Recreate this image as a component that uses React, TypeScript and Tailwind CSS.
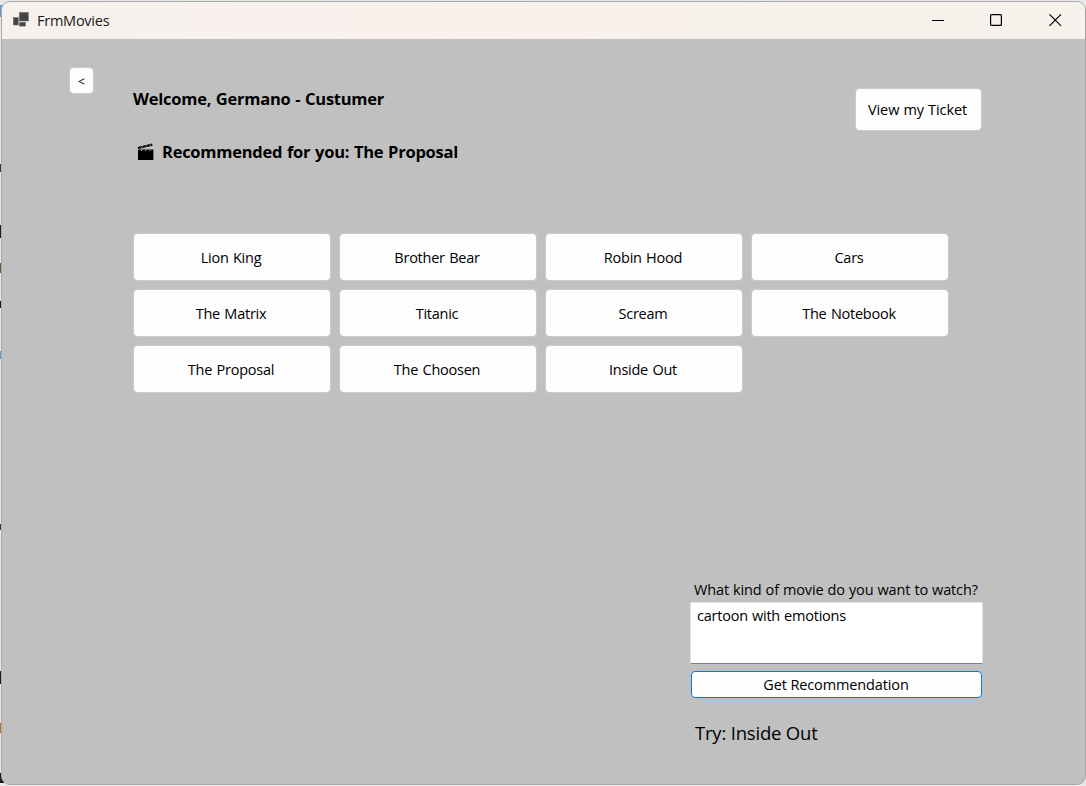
import React from "react";

const movies = [
  "Lion King",
  "Brother Bear",
  "Robin Hood",
  "Cars",
  "The Matrix",
  "Titanic",
  "Scream",
  "The Notebook",
  "The Proposal",
  "The Choosen",
  "Inside Out",
];

function AppIcon() {
  return (
    <svg width="16" height="15" viewBox="0 0 16 15" className="shrink-0">
      <rect x="6.3" y="0.5" width="9" height="8.5" fill="#444" stroke="#6e6e6e" strokeWidth="0.6" />
      <rect x="0.3" y="5.6" width="5" height="7.4" fill="#444" stroke="#6e6e6e" strokeWidth="0.6" />
      <rect x="6.5" y="10.3" width="6" height="3.8" fill="#444" stroke="#6e6e6e" strokeWidth="0.6" />
    </svg>
  );
}

function Clapper() {
  return (
    <svg width="17" height="18" viewBox="0 0 17 18" className="shrink-0">
      <path d="M1 6.6H16.4V17H1Z" fill="#000" />
      <path d="M0.6 4.1L15 0.6L15.6 2.7L1.2 5.9Z" fill="#000" />
      <path d="M4.2 4.6L6 3.2M8.6 3.6L10.4 2.2M12.6 2.7L14.2 1.4" stroke="#a8a8a8" strokeWidth="0.9" />
      <path d="M3.8 8.2L5 6.8M8.2 8.2L9.4 6.8M12.6 8.2L13.8 6.8" stroke="#a8a8a8" strokeWidth="1" />
    </svg>
  );
}

function TitleBar() {
  return (
    <header className="flex h-[37px] shrink-0 items-start bg-linear-to-r from-[#f6f1ec] via-[#faf0ec] via-45% to-[#f6f1ea] to-75% pl-[11px]">
      <div className="mt-[10px]">
        <AppIcon />
      </div>
      <span className="mt-[9px] ml-[8px] text-[14.5px] leading-[20px] tracking-[-0.25px] text-[#1a1a1a]">FrmMovies</span>
      <div className="mt-[12px] mr-[23px] ml-auto flex">
        <svg className="mr-[45px]" width="13" height="13" viewBox="0 0 13 13">
          <path d="M0 6.5H12" stroke="#000" strokeWidth="1" />
        </svg>
        <svg className="mr-[46px]" width="13" height="13" viewBox="0 0 13 13">
          <rect x="0.6" y="0.6" width="10.8" height="10.8" rx="1" fill="none" stroke="#000" strokeWidth="1.2" />
        </svg>
        <svg width="13" height="13" viewBox="0 0 13 13">
          <path d="M0.5 0.3L12 11.8M12 0.3L0.5 11.8" stroke="#000" strokeWidth="1.1" />
        </svg>
      </div>
    </header>
  );
}

const buttonBase =
  "flex items-center justify-center rounded-[4px] border border-[#cbcbcb] bg-[#fdfdfd] bg-clip-padding text-black";

export default function App() {
  return (
    <div className="relative h-[786px] w-[1086px] overflow-hidden bg-[#e6e8e9] font-['Open_Sans','Noto_Sans',sans-serif] text-black">
      <div className="absolute top-[5px] left-0 h-[12px] w-[3px] bg-[#5c9cd9]" />
      <div className="absolute top-[164px] left-0 h-[8px] w-[2px] bg-[#39373b]" />
      <div className="absolute top-[225px] left-0 h-[13px] w-[2px] bg-[#171c28]" />
      <div className="absolute top-[263px] left-0 h-[10px] w-[2px] bg-[#6b5640]" />
      <div className="absolute top-[301px] left-0 h-[7px] w-[2px] bg-[#171c28]" />
      <div className="absolute top-[351px] left-0 h-[8px] w-[2px] bg-[#5c9cd9]" />
      <div className="absolute top-[524px] left-0 h-[6px] w-[2px] bg-[#39373b]" />
      <div className="absolute top-[671px] left-0 h-[13px] w-[2px] bg-[#171c28]" />
      <div className="absolute top-[723px] left-0 h-[10px] w-[2px] bg-[#b5712f]" />
      <div className="absolute top-[773px] left-0 h-[10px] w-[4px] bg-[#171c28]" />

      <div className="relative mt-px ml-px flex h-[784px] w-[1085px] flex-col overflow-hidden rounded-[9px] border border-[#a9abab] bg-[#c0c0c0]">
        <TitleBar />

        <main className="flex flex-1 flex-col">
          <section className="flex h-[194px] items-start">
            <button className={`${buttonBase} mt-[28px] ml-[67px] h-[27px] w-[25px] pt-[2px] text-[12px]`}>&lt;</button>
            <div className="ml-[39px] flex flex-col">
              <h1 className="mt-[48px] text-[16.5px] leading-[24px] font-bold tracking-[-0.25px] whitespace-nowrap [word-spacing:0.7px]">
                Welcome, Germano - Custumer
              </h1>
              <div className="mt-[29px] flex items-center pl-[4px]">
                <Clapper />
                <h2 className="ml-[8px] text-[16.5px] leading-[24px] font-bold tracking-[-0.25px] whitespace-nowrap [word-spacing:0.7px]">
                  Recommended for you: The Proposal
                </h2>
              </div>
            </div>
            <button className={`${buttonBase} mt-[49px] mr-[103px] ml-auto h-[43px] w-[127px] pr-[2px] text-[14.5px] tracking-[-0.1px] [word-spacing:0.5px]`}>
              View my Ticket
            </button>
          </section>

          <section className="ml-[131px] grid w-[816px] grid-cols-4 gap-2">
            {movies.map((title) => (
              <button key={title} className={`${buttonBase} h-[48px] pt-[2px] pr-[2px] text-[14.5px] tracking-[-0.25px] [word-spacing:0.9px]`}>
                {title}
              </button>
            ))}
          </section>

          <section className="mt-[186px] ml-[688px] flex w-[293px] flex-col">
            <label className="ml-[4px] text-[14.5px] leading-[22px] tracking-[-0.15px] whitespace-nowrap [word-spacing:0.5px]">
              What kind of movie do you want to watch?
            </label>
            <textarea
              defaultValue="cartoon with emotions"
              className="mt-px h-[62px] resize-none rounded-[2px] border border-[#e2e2e2] border-b-[#808080] bg-white px-[6px] py-[3px] text-[14.5px] leading-[20px] tracking-[-0.22px] [word-spacing:0.5px] outline-none"
            />
            <button className="mt-[7px] ml-px flex h-[27px] w-[291px] items-center justify-center rounded-[4px] border border-[#0f78d0] bg-[#fdfdfd] pr-px text-[14.5px] tracking-[-0.12px]">
              Get Recommendation
            </button>
            <p className="mt-[22px] ml-[5px] text-[18.5px] leading-[26px] tracking-[-0.2px] whitespace-nowrap">Try: Inside Out</p>
          </section>
        </main>
      </div>
    </div>
  );
}
